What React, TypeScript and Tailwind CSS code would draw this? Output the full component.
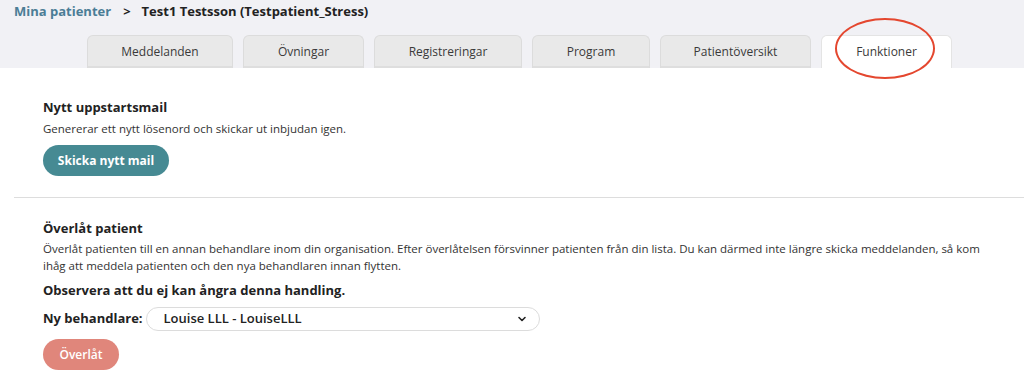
import React from "react";

const tabs = [
  { label: "Meddelanden", w: "w-[146px]" },
  { label: "Övningar", w: "w-[121px]" },
  { label: "Registreringar", w: "w-[148px]" },
  { label: "Program", w: "w-[118px]" },
  { label: "Patientöversikt", w: "w-[151px]" },
];

const App = () => {
  return (
    <div className="relative w-[1024px] h-[388px] overflow-hidden bg-white font-['Open_Sans',sans-serif] text-[#222]">
      <div className="h-[68px] bg-[#f1f1f5] flex flex-col">
        <div className="flex items-center pl-[14px] pt-[1px] h-[22px] text-[13px] font-bold">
          <span className="text-[#4b7d96]">Mina patienter</span>
          <span className="ml-[12px] mr-[11px] text-[#222]">&gt;</span>
          <span className="text-[#222]">Test1 Testsson (Testpatient_Stress)</span>
        </div>
        <div className="mt-auto flex gap-[10px] pl-[87px]">
          {tabs.map((t) => (
            <div
              key={t.label}
              className={`${t.w} h-[33px] flex items-center justify-center rounded-t-[6px] border border-b-0 border-[#dcdcdc] bg-[#e9e9e9] text-[12px] text-[#3a3a3a] shadow-[inset_0_-2px_0_#dedede]`}
            >
              {t.label}
            </div>
          ))}
          <div className="w-[131px] h-[33px] flex items-center justify-center rounded-t-[6px] border border-b-0 border-[#e4e4e4] bg-white text-[12px] text-[#3a3a3a]">
            Funktioner
          </div>
        </div>
      </div>

      <div className="absolute left-[835px] top-[18px] w-[100px] h-[61px] rounded-[50%] border-2 border-[#e4472f]" />

      <div className="pl-[43px] pt-[31px] pb-[21px]">
        <h2 className="text-[13px] font-bold leading-[16px]">Nytt uppstartsmail</h2>
        <p className="mt-[6px] text-[11.5px] leading-[16px] text-[#333]">
          Genererar ett nytt lösenord och skickar ut inbjudan igen.
        </p>
        <button className="mt-[8px] h-[31px] w-[126px] rounded-full bg-[#468a93] text-[12px] font-bold text-white">
          Skicka nytt mail
        </button>
      </div>

      <div className="ml-[14px] border-t border-[#dddddd]" />

      <div className="pl-[43px] pt-[22px]">
        <h2 className="text-[13px] font-bold leading-[16px]">Överlåt patient</h2>
        <p className="mt-[4px] text-[11.5px] leading-[17px] text-[#333]">
          Överlåt patienten till en annan behandlare inom din organisation. Efter överlåtelsen försvinner patienten från din lista. Du kan därmed inte längre skicka meddelanden, så kom
          <br />
          ihåg att meddela patienten och den nya behandlaren innan flytten.
        </p>
        <p className="mt-[8px] text-[13px] font-bold leading-[16px]">
          Observera att du ej kan ångra denna handling.
        </p>
        <div className="mt-[9px] flex items-center gap-[3px]">
          <span className="text-[13px] font-bold">Ny behandlare:</span>
          <div className="flex h-[24px] w-[394px] items-center justify-between rounded-full border border-[#dcdcdc] bg-white pl-[17px] pr-[12px]">
            <span className="text-[13px] font-semibold text-[#222]">Louise LLL - LouiseLLL</span>
            <svg width="10" height="10" viewBox="0 0 10 10" fill="none">
              <path d="M2 3.5 L5 6.5 L8 3.5" stroke="#222" strokeWidth="1.6" strokeLinecap="round" strokeLinejoin="round" />
            </svg>
          </div>
        </div>
        <button className="mt-[8px] h-[31px] w-[76px] rounded-full bg-[#e0867b] text-[12px] font-semibold text-white">
          Överlåt
        </button>
      </div>
    </div>
  );
};

export default App;
